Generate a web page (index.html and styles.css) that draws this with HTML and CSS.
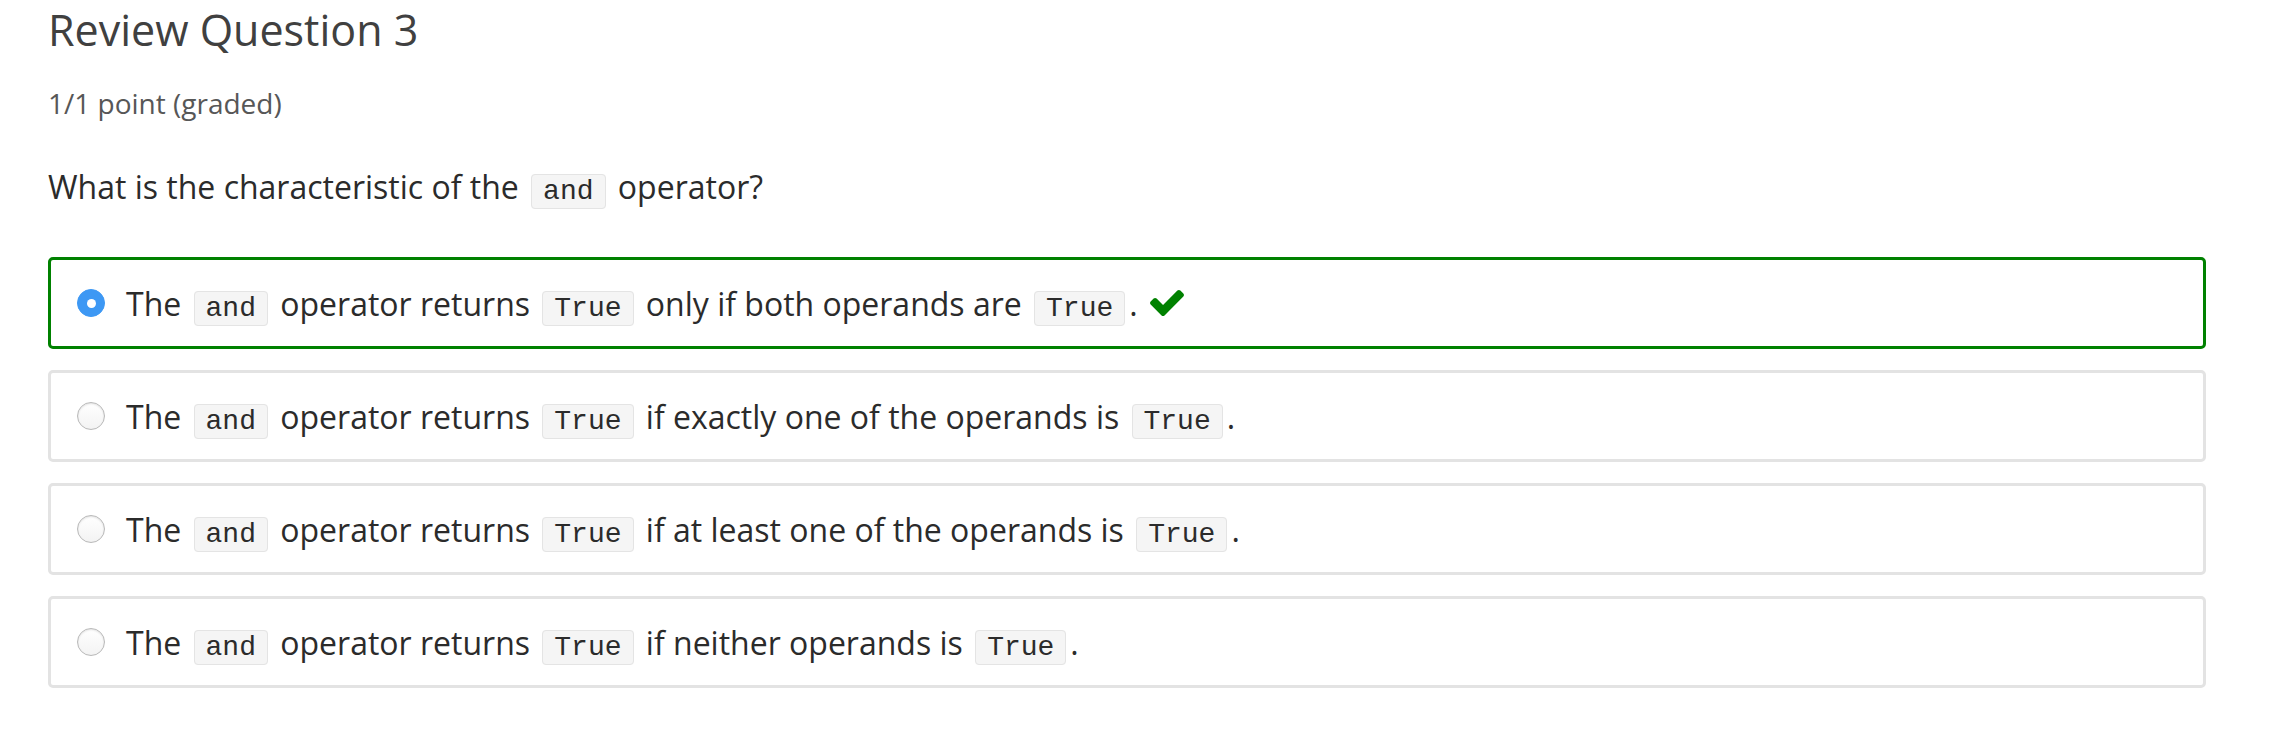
FILE: index.html
```html
<!DOCTYPE html>
<html lang="en">
<head>
<meta charset="utf-8">
<title>Review Question 3</title>
<link rel="stylesheet" href="styles.css">
</head>
<body>
<div class="problem">
  <h2 class="problem-header">Review Question 3</h2>
  <div class="problem-progress">1/1 point (graded)</div>
  <p class="question">What is the characteristic of the <code>and</code> operator?</p>
  <div class="choices">
    <label class="choice correct">
      <input type="radio" name="q3" checked>
      <span class="choice-text">The <code>and</code> operator returns <code>True</code> only if both operands are <code>True</code>.</span>
      <svg class="check" viewBox="121 334 1550 1188" width="34" height="26" aria-hidden="true"><path fill="#008100" d="M1671 566q0 40-28 68l-724 724-136 136q-28 28-68 28t-68-28l-136-136-362-362q-28-28-28-68t28-68l136-136q28-28 68-28t68 28l294 295 656-657q28-28 68-28t68 28l136 136q28 28 28 68z"/></svg>
    </label>
    <label class="choice">
      <input type="radio" name="q3">
      <span class="choice-text">The <code>and</code> operator returns <code>True</code> if exactly one of the operands is <code>True</code>.</span>
    </label>
    <label class="choice">
      <input type="radio" name="q3">
      <span class="choice-text">The <code>and</code> operator returns <code>True</code> if at least one of the operands is <code>True</code>.</span>
    </label>
    <label class="choice">
      <input type="radio" name="q3">
      <span class="choice-text">The <code>and</code> operator returns <code>True</code> if neither operands is <code>True</code>.</span>
    </label>
  </div>
</div>
</body>
</html>
```
FILE: styles.css
```css
html, body {
  margin: 0;
  padding: 0;
  background: #ffffff;
}

body {
  font-family: "Open Sans", "Liberation Sans", sans-serif;
  color: #313131;
}

.problem {
  padding: 0 68px 0 48px;
}

.problem-header {
  margin: 0;
  padding-top: 2px;
  font-size: 43px;
  font-weight: 400;
  line-height: 56px;
  color: #404040;
}

.problem-progress {
  margin-top: 27px;
  font-size: 28px;
  line-height: 36px;
  color: #575757;
}

.question {
  margin: 44px 0 0;
  font-size: 32px;
  line-height: 44px;
  color: #2b2b2b;
}

code {
  font-family: "Liberation Mono", "DejaVu Sans Mono", monospace;
  font-size: 28px;
  padding: 1px 11px;
  margin: 0 4px;
  background: #f5f5f5;
  border: 1px solid #e4e4e4;
  border-radius: 4px;
  color: #2b2b2b;
}

.choices {
  margin-top: 43px;
  display: flex;
  flex-direction: column;
  gap: 21px;
}

.choice {
  display: flex;
  align-items: center;
  height: 86px;
  padding: 0 26px;
  border: 3px solid #e3e3e3;
  border-radius: 5px;
  font-size: 32px;
  color: #2b2b2b;
}

.choice.correct {
  border-color: #008100;
}

.choice input {
  appearance: none;
  -webkit-appearance: none;
  margin: 0 21px 0 0;
  width: 28px;
  height: 28px;
  border-radius: 50%;
  border: 1px solid #b9b9b9;
  background: linear-gradient(#ffffff, #f3f3f3);
  box-shadow: inset 0 1px 2px rgba(0,0,0,0.12);
  flex: none;
  position: relative;
}

.choice input:checked {
  border-color: #3d98f4;
  background: #3d98f4;
  box-shadow: none;
}

.choice input:checked::after {
  content: "";
  position: absolute;
  left: 50%;
  top: 50%;
  width: 9px;
  height: 9px;
  margin: -4.5px 0 0 -4.5px;
  border-radius: 50%;
  background: #ffffff;
}

.check {
  margin-left: 12px;
  flex: none;
}
```
